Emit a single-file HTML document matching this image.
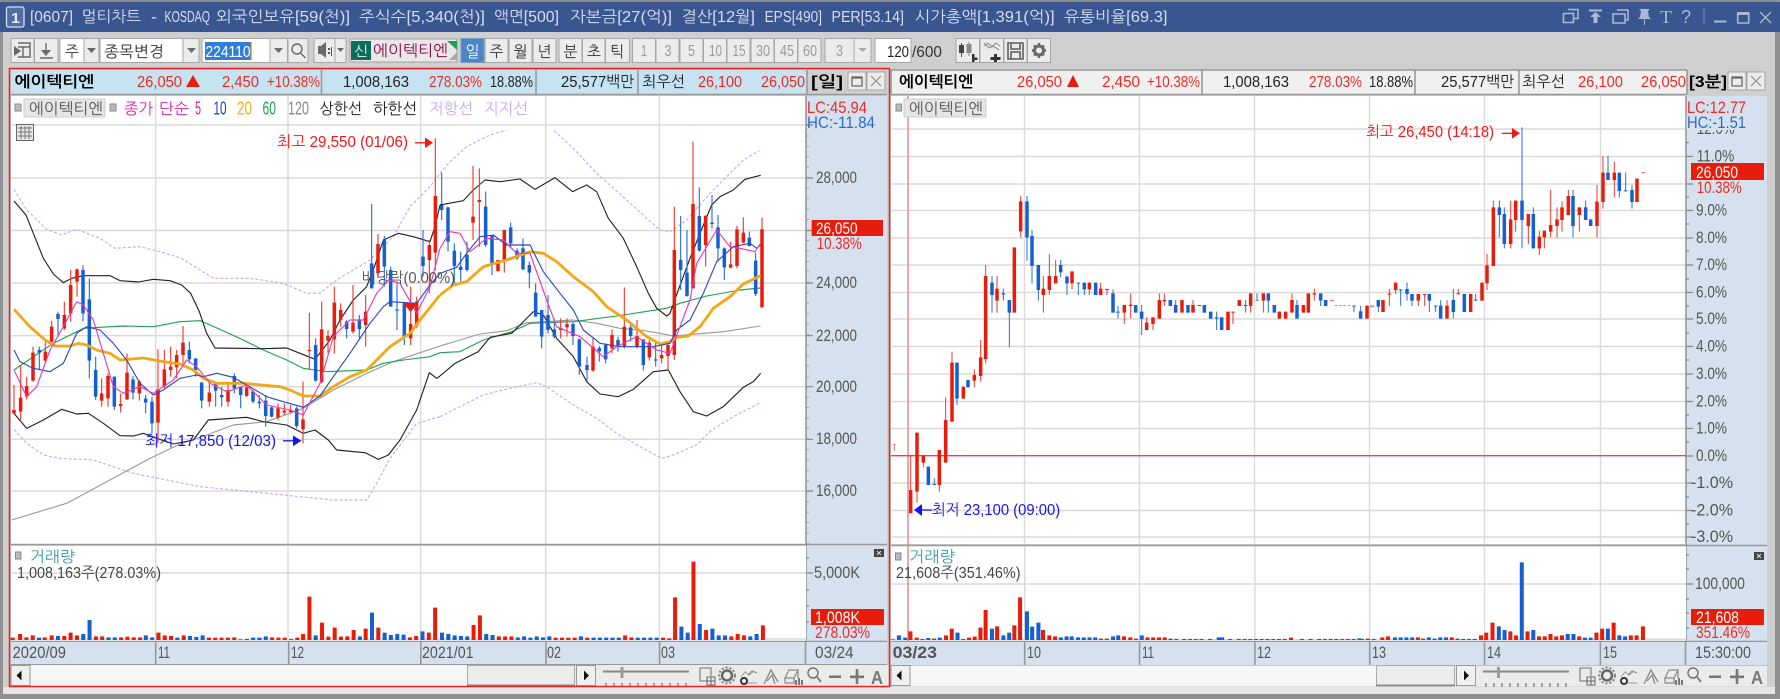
<!DOCTYPE html>
<html lang="ko"><head><meta charset="utf-8"><title>멀티차트</title>
<style>
html,body{margin:0;padding:0;background:#cfcfcf;width:1780px;height:699px;overflow:hidden}
svg{display:block;position:absolute;left:0;top:0;filter:blur(.35px)}
text{font-family:"Liberation Sans","NanumGothic","Noto Sans CJK KR",sans-serif;font-size:15.5px;fill:#333}
.t text{fill:#d4deef}.r{fill:#ee2a22}.k{fill:#222}.g{fill:#555;font-size:16.5px}.b{font-weight:700;fill:#000}
.btn{fill:#ececec;stroke:#a6a6a6;stroke-width:1}.dis{fill:#9a9a9a;font-size:16px}.ln{fill:none;stroke-linejoin:round}
.grid{fill:none;stroke:#dadada;stroke-width:1.4}.ax{fill:#d6e1ef}.sep{stroke:#989898;stroke-width:1.6;fill:none}
.ti{fill:none;stroke:#6a6a6a;stroke-width:1.4}.tf{fill:#6a6a6a}.ic{fill:none;stroke:#a9b8d4;stroke-width:1.6}.if{fill:#a9b8d4}
</style></head><body>
<svg width="1780" height="699" viewBox="0 0 1780 699" xmlns="http://www.w3.org/2000/svg">
<rect width="1780" height="699" fill="#cfcfcf"/>
<rect width="1780" height="2" fill="#8a8a8a"/><rect width="3" height="699" fill="#8f8f8f"/><rect x="1775" width="5" height="699" fill="#8f8f8f"/>
<rect x="0" y="694" width="1780" height="5" fill="#8f8f8f"/><rect x="3" y="687" width="1772" height="7" fill="#e6e6e6"/>
<rect x="0" y="2" width="1780" height="30" fill="#3a5690"/>
<rect x="6.5" y="7" width="17.5" height="20" rx="2" fill="#4f6da6" stroke="#d4deef" stroke-width="1.3"/>
<text x="11" y="23" textLength="9" lengthAdjust="spacingAndGlyphs" style="font-size:15px;font-weight:700;fill:#e8eef8">1</text>
<g class="t">
<text x="30" y="22" textLength="43" lengthAdjust="spacingAndGlyphs">[0607]</text>
<text x="81.5" y="22" textLength="59.5" lengthAdjust="spacingAndGlyphs">멀티차트</text>
<text x="151" y="22" textLength="6" lengthAdjust="spacingAndGlyphs">-</text>
<text x="164.5" y="22" textLength="45.5" lengthAdjust="spacingAndGlyphs" style="font-size:16px">KOSDAQ</text>
<text x="216" y="22" textLength="134" lengthAdjust="spacingAndGlyphs">외국인보유[59(천)]</text>
<text x="359" y="22" textLength="126" lengthAdjust="spacingAndGlyphs">주식수[5,340(천)]</text>
<text x="494" y="22" textLength="65" lengthAdjust="spacingAndGlyphs">액면[500]</text>
<text x="570" y="22" textLength="102" lengthAdjust="spacingAndGlyphs">자본금[27(억)]</text>
<text x="681.5" y="22" textLength="73.5" lengthAdjust="spacingAndGlyphs">결산[12월]</text>
<text x="764.6" y="22" textLength="57.4" lengthAdjust="spacingAndGlyphs" style="font-size:16px">EPS[490]</text>
<text x="831.5" y="22" textLength="72.5" lengthAdjust="spacingAndGlyphs" style="font-size:16px">PER[53.14]</text>
<text x="914.6" y="22" textLength="140" lengthAdjust="spacingAndGlyphs">시가총액[1,391(억)]</text>
<text x="1064" y="22" textLength="103.5" lengthAdjust="spacingAndGlyphs">유통비율[69.3]</text>
</g>
<!-- window icons -->
<path class="ic" d="M1568 9.5h10v9h-4M1563.5 13.5h10v9h-10z"/>
<path class="if" d="M1589 9.5h13v2h-13zM1595.5 12l5.5 5h-3.500v6h-4v-6h-3.500z"/>
<path class="ic" d="M1617 10h11v10h-3M1613 14h12v9h-12z"/>
<path class="if" d="M1639 9h11l-2 2 1 6 2 2h-6v6h-1v-6h-6l2-2 1-6z"/>
<text x="1660" y="23" textLength="12" lengthAdjust="spacingAndGlyphs" style="font-family:'Liberation Serif',serif;font-size:18px;fill:#a9b8d4">T</text>
<text x="1681" y="23" textLength="10" lengthAdjust="spacingAndGlyphs" style="font-size:18px;fill:#a9b8d4">?</text>
<path d="M1704 8v17" stroke="#7c90b8" stroke-width="1"/>
<rect x="1714" y="20.500" width="12.500" height="2" fill="#a9b8d4"/>
<path class="ic" d="M1737.700 13h11v10h-11z"/><rect x="1737" y="12" width="12.500" height="3" fill="#a9b8d4"/>
<path d="M1760 12l11 11M1771 12l-11 11" stroke="#a9b8d4" stroke-width="1.300"/>

<!-- toolbar -->
<rect class="btn" x="11" y="38.500" width="23" height="24"/><rect class="btn" x="34.500" y="38.500" width="23.500" height="24"/>
<path class="ti" d="M18 43h12v14H18M18 47h12M23 47v10"/><path class="tf" d="M14 46l7 5-7 5z"/>
<path class="ti" d="M46 43v9M40 58h13"/><path class="tf" d="M41 50h10l-5 6z"/>
<rect x="60" y="38.500" width="24" height="24" fill="#fff" stroke="#a6a6a6"/><text x="65" y="57" textLength="14" lengthAdjust="spacingAndGlyphs">주</text>
<rect class="btn" x="84" y="38.500" width="15" height="24"/><path class="tf" d="M87 48h9l-4.500 5z"/>
<rect x="100" y="38.500" width="83" height="24" fill="#fff" stroke="#a6a6a6"/><text x="104" y="57" textLength="60" lengthAdjust="spacingAndGlyphs">종목변경</text>
<rect class="btn" x="183" y="38.500" width="16" height="24"/><path class="tf" d="M187 48h9l-4.500 5z"/>
<rect x="202" y="38.500" width="68" height="24" fill="#fff" stroke="#a6a6a6"/><rect x="205" y="42" width="46" height="18" fill="#2f7fd6"/>
<text x="205.500" y="57" textLength="45" lengthAdjust="spacingAndGlyphs" style="fill:#fff">224110</text><rect x="250.500" y="42" width="1.200" height="18" fill="#f08a20"/>
<rect class="btn" x="270" y="38.500" width="17.500" height="24"/><path class="tf" d="M274 48h9l-4.500 5z"/>
<rect class="btn" x="288" y="38.500" width="20" height="24"/><circle class="ti" cx="297" cy="49" r="5"/><path class="ti" d="M300.500 53l5 5"/>
<rect class="btn" x="314" y="38.500" width="21" height="24"/><path class="tf" d="M318 46h3l5-4v16l-5-4h-3z"/><path d="M328 48h2v2h-2zM328 52h2v2h-2zM331 47h1v9h-1z" fill="#555"/>
<rect class="btn" x="335" y="38.500" width="11" height="24"/><path class="tf" d="M337 48h7l-3.500 4z"/>
<rect x="350" y="39" width="107" height="23" fill="#e8e8e8" stroke="#a6a6a6"/><rect x="351" y="41" width="20" height="19" fill="#0a6d5e"/>
<text x="354" y="56" textLength="14" lengthAdjust="spacingAndGlyphs" style="fill:#e8f5f0;font-size:14px">신</text>
<text x="373" y="56" textLength="75" lengthAdjust="spacingAndGlyphs" style="fill:#8d0a48">에이텍티엔</text>
<path d="M447 41h10v9z" fill="#18a05a"/><path d="M457 52v8h-8z" fill="#aaa"/>
<rect x="461" y="38.500" width="23" height="24" fill="#4c86c4" stroke="#7a9cc4"/><text x="465.500" y="57" textLength="14" lengthAdjust="spacingAndGlyphs" style="fill:#fff">일</text>
<rect class="btn" x="485" y="38.500" width="23" height="24"/><text x="489.500" y="57" textLength="14" lengthAdjust="spacingAndGlyphs">주</text>
<rect class="btn" x="509" y="38.500" width="23" height="24"/><text x="513.500" y="57" textLength="14" lengthAdjust="spacingAndGlyphs">월</text>
<rect class="btn" x="533" y="38.500" width="23" height="24"/><text x="537.500" y="57" textLength="14" lengthAdjust="spacingAndGlyphs">년</text>
<rect class="btn" x="559" y="38.500" width="23" height="24"/><text x="563.500" y="57" textLength="14" lengthAdjust="spacingAndGlyphs">분</text>
<rect class="btn" x="582.500" y="38.500" width="22.500" height="24"/><text x="587" y="57" textLength="14" lengthAdjust="spacingAndGlyphs">초</text>
<rect class="btn" x="605.500" y="38.500" width="24" height="24"/><text x="610" y="57" textLength="14" lengthAdjust="spacingAndGlyphs">틱</text>
<rect class="btn" x="632.500" y="38.500" width="23" height="24"/><text x="641" y="56" class="dis" textLength="6" lengthAdjust="spacingAndGlyphs">1</text>
<rect class="btn" x="656" y="38.500" width="23" height="24"/><text x="664.500" y="56" class="dis" textLength="7" lengthAdjust="spacingAndGlyphs">3</text>
<rect class="btn" x="680" y="38.500" width="23" height="24"/><text x="688" y="56" class="dis" textLength="7" lengthAdjust="spacingAndGlyphs">5</text>
<rect class="btn" x="703.500" y="38.500" width="23" height="24"/><text x="709" y="56" class="dis" textLength="13" lengthAdjust="spacingAndGlyphs">10</text>
<rect class="btn" x="727" y="38.500" width="23" height="24"/><text x="732.500" y="56" class="dis" textLength="13" lengthAdjust="spacingAndGlyphs">15</text>
<rect class="btn" x="751" y="38.500" width="23" height="24"/><text x="756" y="56" class="dis" textLength="14" lengthAdjust="spacingAndGlyphs">30</text>
<rect class="btn" x="774.500" y="38.500" width="23" height="24"/><text x="780" y="56" class="dis" textLength="14" lengthAdjust="spacingAndGlyphs">45</text>
<rect class="btn" x="798" y="38.500" width="23" height="24"/><text x="803" y="56" class="dis" textLength="14" lengthAdjust="spacingAndGlyphs">60</text>
<rect class="btn" x="825" y="38.500" width="29" height="24"/><text x="836" y="56" class="dis" textLength="7" lengthAdjust="spacingAndGlyphs">3</text>
<rect class="btn" x="854" y="38.500" width="17" height="24"/><path d="M858 48h9l-4.500 4z" fill="#aaa"/>
<rect x="875" y="38.500" width="36" height="24" fill="#fff" stroke="#a6a6a6"/><text x="887" y="57" textLength="22" lengthAdjust="spacingAndGlyphs" class="k">120</text>
<text x="912" y="57" textLength="30" lengthAdjust="spacingAndGlyphs">/600</text>
<rect class="btn" x="956" y="38.500" width="23.500" height="24"/><rect class="btn" x="980" y="38.500" width="23.500" height="24"/><rect class="btn" x="1004" y="38.500" width="23" height="24"/><rect class="btn" x="1027.500" y="38.500" width="23" height="24"/>
<path d="M961.500 43v14" stroke="#444" stroke-width="1"/><rect x="959" y="45" width="5" height="8" fill="#444"/><path d="M969 42v14" stroke="#888" stroke-width="1"/><rect x="966.500" y="44" width="5" height="9" fill="#888"/><path d="M972 54h2.500v3.500h3v2.500h-3v2h-2.500z" fill="#333"/>
<path d="M984 46l4-3 4 4 4-4 4 3M984 43l5 5 4-2 6 4" fill="none" stroke="#888" stroke-width="1"/><path d="M994 54h3v3h3.500v3h-3.500v2h-3v-2h-3.500v-3h3.500z" fill="#333"/>
<path d="M1008 43h15v16h-15zM1011 43v6h9v-6M1011 59v-7h9v7" fill="none" stroke="#6e6e6e" stroke-width="1.800"/>
<circle cx="1039" cy="50.500" r="4.500" fill="none" stroke="#6a6a6a" stroke-width="3"/><path d="M1039 43v3M1039 55v3M1032 50.500h3M1043 50.500h3M1034 45.500l2 2M1042 53.500l2 2M1044 45.500l-2 2M1036 53.500l-2 2" stroke="#6a6a6a" stroke-width="2.400"/>

<!-- LEFT PANE -->
<rect x="11" y="70" width="796" height="24" fill="#c5e3f0"/>
<rect x="807" y="70" width="80" height="24" fill="#cfcfcf"/>
<path class="sep" d="M11 94.500H887M321.500 70v24M536 70v24M638 70v24M807 70v24"/>
<text class="b" x="14.500" y="87" textLength="79.500" lengthAdjust="spacingAndGlyphs">에이텍티엔</text>
<text class="r" x="137" y="87" textLength="45" lengthAdjust="spacingAndGlyphs">26,050</text><path d="M186 87l7-12 7 12z" fill="#ea1c0c"/>
<text class="r" x="222" y="87" textLength="37" lengthAdjust="spacingAndGlyphs">2,450</text>
<text class="r" x="267" y="87" textLength="53" lengthAdjust="spacingAndGlyphs">+10.38%</text>
<text class="k" x="343" y="87" textLength="66" lengthAdjust="spacingAndGlyphs">1,008,163</text>
<text class="r" x="429" y="87" textLength="53" lengthAdjust="spacingAndGlyphs">278.03%</text>
<text class="k" x="490" y="87" textLength="43" lengthAdjust="spacingAndGlyphs">18.88%</text>
<text class="k" x="561" y="87" textLength="73" lengthAdjust="spacingAndGlyphs">25,577백만</text>
<text class="k" x="642" y="87" textLength="43" lengthAdjust="spacingAndGlyphs">최우선</text>
<text class="r" x="698" y="87" textLength="44" lengthAdjust="spacingAndGlyphs">26,100</text>
<text class="r" x="761" y="87" textLength="44" lengthAdjust="spacingAndGlyphs">26,050</text>
<text class="b" x="811" y="87" textLength="32" lengthAdjust="spacingAndGlyphs">[일]</text>
<rect class="btn" x="848" y="72" width="18" height="18"/><path d="M852 77h10v9h-10zM852 78h10" fill="none" stroke="#666" stroke-width="1.300"/>
<rect class="btn" x="867" y="72" width="18" height="18"/><path d="M871 76l10 10M881 76l-10 10" stroke="#888" stroke-width="1"/>

<rect x="11" y="96" width="795" height="448" fill="#fff"/>
<rect class="ax" x="806" y="96" width="81" height="568"/>
<path class="grid" d="M11 125H806M11 178H806M11 230.500H806M11 283H806M11 335.700H806M11 386.700H806M11 439.300H806M11 491H806M155.700 96V544M288 96V544M420.700 96V544M545.700 96V544M659.300 96V544"/>
<path class="sep" d="M806 96V664"/>
<path d="M807.500 125V544" stroke="#a0a0a0" stroke-width="3" fill="none" stroke-dasharray="1 9.450"/>
<path d="M806 125h7M806 178h7M806 230.500h7M806 283h7M806 335.700h7M806 386.700h7M806 439.300h7M806 491h7" stroke="#888" stroke-width="1.200"/>
<text class="g" x="816" y="183" textLength="41" lengthAdjust="spacingAndGlyphs">28,000</text>
<text class="g" x="816" y="288" textLength="41" lengthAdjust="spacingAndGlyphs">24,000</text>
<text class="g" x="816" y="341" textLength="41" lengthAdjust="spacingAndGlyphs">22,000</text>
<text class="g" x="816" y="392" textLength="41" lengthAdjust="spacingAndGlyphs">20,000</text>
<text class="g" x="816" y="444" textLength="41" lengthAdjust="spacingAndGlyphs">18,000</text>
<text class="g" x="816" y="496" textLength="41" lengthAdjust="spacingAndGlyphs">16,000</text>
<rect x="811.700" y="220" width="71.300" height="16" fill="#e81c0a"/>
<text x="816" y="234" textLength="41.500" lengthAdjust="spacingAndGlyphs" style="font-size:16.5px;fill:#fff">26,050</text>
<text class="r" x="816.700" y="249" textLength="45" lengthAdjust="spacingAndGlyphs" style="font-size:16.5px">10.38%</text>
<text class="r" x="807" y="113" textLength="60" lengthAdjust="spacingAndGlyphs" style="font-size:16.5px">LC:45.94</text>
<text x="807" y="128" textLength="68" lengthAdjust="spacingAndGlyphs" style="font-size:16.5px;fill:#2a6ad0">HC:-11.84</text>

<!-- left candles & lines part 1 -->
<svg x="0" y="130" width="806" height="414" viewBox="0 0 2418 1242" style="overflow:hidden;filter:none">
<g fill="none" stroke-width="3.4" class="ln">
<polyline stroke="#c8a8f0" stroke-dasharray="9 6" points="42,178 80,240 140,298 185,315 230,298 300,325 345,355 420,350 480,365 545,385 600,420 640,445 750,445 850,460 920,490 960,490 1010,450 1110,390 1180,320 1230,230 1290,170 1320,130"/>
<polyline stroke="#c8a8f0" stroke-dasharray="9 6" points="42,898 80,940 130,975 180,985 280,990 400,1030 600,1070 800,1090 1000,1110 1100,1110 1130,1060 1170,985 1250,880 1320,860"/>
<polyline stroke="#999" points="35,1170 200,1120 450,985 540,942 620,915 700,885 800,875 910,835 1000,780 1100,730 1180,695 1260,668 1320,648"/>
<polyline stroke="#20a050" points="42,720 100,680 160,640 250,595 300,592 370,588 460,590 540,575 600,572 660,598 730,630 790,660 860,690 910,715 980,725 1100,720 1150,700 1210,690 1290,680 1320,668"/>
<polyline stroke="#222" points="42,213 78,255 100,310 130,385 160,432 190,458 215,445 250,437 330,437 360,452 415,456 460,448 510,452 545,465 572,490 598,545 620,610 645,654 790,656 860,654 900,670 945,688 990,630 1020,570 1060,510 1100,470 1125,405 1150,330 1195,310 1240,320 1290,335 1305,290 1320,225"/>
<polyline stroke="#222" points="42,850 80,895 130,870 185,838 230,852 265,850 310,880 360,917 400,918 430,910 470,925 520,942 580,930 625,870 740,862 790,875 860,885 910,910 945,900 985,930 1010,960 1095,968 1135,988 1165,975 1200,930 1250,840 1288,728 1310,745 1320,738"/>
<path stroke="#ee3a2e" d="M42 765V850M62 705V870M80 740V808M99 650V755M136 628V695M155 572V648M193 515V600M212 420V575M231 415V500M305 745V830M324 730V830M362 790V848M381 670V810M418 750V812M474 658V940M493 660V775M512 650V740M530 660V745M549 588V700M628 755V830M684 755V830M740 760V800M834 820V870M853 820V855M872 825V850M909 755V940M928 548V720M965 515V760M984 600V670M1003 470V670M1022 520V590M1059 465V610M1097 495V650M1134 312V440M1232 470V645M1250 500V595M1288 330V490M1306 25V420"/>
<path stroke="#2a6fd6" d="M118 650V720M174 545V615M249 405V575M268 445V745M287 680V810M343 740V840M399 738V808M437 795V850M456 800V910M568 635V700M587 685V740M605 755V835M647 755V830M665 770V830M703 730V790M722 770V835M759 780V820M778 795V835M797 795V890M815 830V862M890 830V895M947 625V755M1040 570V625M1078 555V625M1115 222V475M1153 318V470M1172 410V530M1191 455V600M1213 520V645M1269 300V440M1325 128V270M1344 230V365"/>
<path stroke="#e81c0a" stroke-width="10.500" d="M42 840V850M62 803V845M80 768V800M99 668V752M136 665V692M155 590V635M193 555V595M212 465V550M231 418V455M305 790V812M324 738V805M362 822V828M381 728V808M418 755V790M474 778V878M493 718V770M512 710V720M530 675V712M549 638V675M628 788V815M684 780V815M740 772V798M834 835V862M853 842V848M872 840V846M909 868V898M928 660V663M965 598V756M984 618V632M1003 518V628M1022 540V570M1059 578V605M1097 545V585M1134 342V430M1232 582V625M1250 515V588M1288 345V390M1306 198V368"/>
<path stroke="#1560d0" stroke-width="10.500" d="M118 660V668M174 552V567M249 420V550M268 508V692M287 720V800M343 740V830M399 748V788M437 806V818M456 815V880M568 660V688M587 685V720M605 758V812M647 762V782M665 795V802M703 738V775M722 770V795M759 785V815M778 815V820M797 812V858M815 832V860M890 835V888M947 645V752M1040 575V597M1078 568V597M1115 400V475M1153 328V410M1172 420V530M1191 538V542M1213 520V620M1269 380V408M1325 222V240M1344 232V335"/>
<polyline stroke="#f0a818" stroke-width="8.500" points="42,538 90,590 135,630 165,648 210,648 235,640 260,645 290,660 330,670 360,690 430,684 490,695 540,702 580,720 610,745 650,760 730,760 840,770 870,780 910,798 960,798 1000,770 1050,740 1100,720 1130,690 1170,650 1230,610 1260,570 1300,520 1320,495"/>
<polyline stroke="#2a48c0" points="42,660 60,695 100,715 150,725 190,700 230,610 260,590 300,600 340,640 380,690 420,760 460,795 490,780 540,745 590,735 610,740 650,730 700,742 740,765 800,800 850,815 910,832 960,798 1000,740 1050,670 1110,580 1150,530 1170,515 1250,520 1290,465 1320,430"/>
<polyline stroke="#e838b8" points="42,720 80,800 110,770 150,660 190,590 230,515 250,525 280,570 310,670 340,770 370,790 420,770 460,790 520,750 560,690 590,710 630,760 680,785 740,765 800,825 870,840 910,855 960,760 1000,620 1050,570 1090,570 1130,490 1165,450 1200,460 1250,550 1290,470 1320,355"/>
</g>
</svg>
<!-- part 2 -->
<svg x="440" y="130" width="366" height="414" viewBox="0 0 1098 1242" style="overflow:hidden;filter:none">
<g fill="none" stroke-width="3.4" class="ln">
<polyline stroke="#c8a8f0" stroke-dasharray="9 6" points="0,130 30,95 80,50 150,15 200,0 270,-36 340,0 400,55 470,130 560,210 620,265 660,300 690,305 740,270 810,190 870,130 910,90 958,62"/>
<polyline stroke="#c8a8f0" stroke-dasharray="9 6" points="0,860 60,830 130,795 210,775 290,758 320,770 400,825 470,865 530,910 600,950 665,985 700,975 770,945 815,900 880,860 958,820"/>
<polyline stroke="#999" points="0,648 60,630 120,612 200,602 260,578 400,570 470,580 540,595 600,600 660,610 700,618 850,605 962,588"/>
<polyline stroke="#20a050" points="0,668 60,665 130,630 215,605 270,580 400,575 530,558 680,535 720,520 800,498 900,480 962,474"/>
<polyline stroke="#222" points="0,225 70,212 100,180 135,150 180,155 240,147 285,178 345,143 398,185 440,165 470,185 505,265 550,325 590,410 625,490 650,535 680,558 690,550 715,480 750,385 780,310 815,225 840,200 880,180 915,148 962,136"/>
<polyline stroke="#222" points="0,738 45,700 115,665 150,622 215,610 255,570 280,545 310,555 350,625 400,680 440,755 480,792 535,800 580,778 640,725 685,720 720,785 760,845 800,858 850,830 910,772 940,755 962,730"/>
<path stroke="#ee3a2e" d="M99 108V330M118 115V350M174 390V425M193 300V428M362 565V625M381 565V620M459 625V725M516 598V670M553 472V655M591 570V655M628 630V692M665 640V700M684 640V722M703 230V690M759 35V475M797 255V410M872 335V415M891 288V415M910 262V340M966 262V532"/>
<path stroke="#2a6fd6" d="M43 340V460M62 365V455M81 335V425M137 185V350M156 315V435M212 278V355M231 355V390M249 325V420M268 395V475M287 460V560M305 540V655M324 495V610M343 565V625M399 575V645M418 625V735M441 680V755M478 648V695M497 640V700M534 620V665M572 580V635M610 628V722M647 638V710M722 258V480M741 300V500M778 172V365M816 195V295M834 255V395M853 352V450M928 305V350M947 368V498"/>
<path stroke="#e81c0a" stroke-width="10.500" d="M99 260V278M118 210V216M174 390V423M193 300V395M362 594V600M381 582V592M459 650V722M516 615V655M553 590V648M591 618V650M628 638V682M665 675V685M684 645V678M703 360V675M759 222V475M797 258V345M872 403V413M891 298V408M910 308V338M966 298V532"/>
<path stroke="#1560d0" stroke-width="10.500" d="M43 362V408M62 410V420M81 375V420M137 230V345M156 315V405M212 292V340M231 362V385M249 355V418M268 405V428M287 488V560M305 540V620M324 555V600M343 598V620M399 582V618M418 628V710M441 705V720M478 654V664M497 645V688M534 630V650M572 592V618M610 628V705M647 688V692M722 390V420M741 428V498M778 258V362M816 278V282M834 292V355M853 355V412M928 323V348M947 392V492"/>
<polyline stroke="#f0a818" stroke-width="8.500" points="0,495 40,465 80,455 130,410 200,390 270,365 310,370 350,395 400,440 460,485 500,530 560,570 620,620 660,642 690,635 710,622 745,618 780,590 820,535 870,500 910,462 962,437"/>
<polyline stroke="#2a48c0" points="0,430 50,412 80,370 120,320 160,315 200,345 270,345 310,425 360,490 400,540 430,600 480,640 540,650 640,650 690,640 710,600 750,570 790,490 830,395 880,350 930,340 950,355 962,345"/>
<polyline stroke="#e838b8" points="0,355 30,305 60,310 90,365 140,325 190,330 230,370 270,370 320,510 350,590 420,620 490,680 530,650 590,620 650,660 690,670 720,590 750,510 770,400 830,300 870,350 900,355 945,365 962,340"/>
</g>
</svg>
<!-- left legend -->
<rect x="15" y="104" width="6" height="7" fill="#bbb" stroke="#888"/>
<rect x="24" y="99" width="81" height="18" fill="#e6e6e6" stroke="#ccc"/>
<text x="29" y="114" textLength="74" lengthAdjust="spacingAndGlyphs" style="fill:#555">에이텍티엔</text>
<rect x="110" y="104" width="6" height="7" fill="#bbb" stroke="#888"/>
<text x="124" y="114" textLength="29" lengthAdjust="spacingAndGlyphs" style="fill:#e020a8">종가</text>
<text x="159" y="114" textLength="30" lengthAdjust="spacingAndGlyphs" style="fill:#e020a8">단순</text>
<text x="195" y="114.500" textLength="6" lengthAdjust="spacingAndGlyphs" style="fill:#e020a8;font-size:18px">5</text>
<text x="213.500" y="114.500" textLength="13" lengthAdjust="spacingAndGlyphs" style="fill:#2040c0;font-size:18px">10</text>
<text x="237" y="114.500" textLength="15" lengthAdjust="spacingAndGlyphs" style="fill:#f0b020;font-size:18px">20</text>
<text x="262.500" y="114.500" textLength="13.500" lengthAdjust="spacingAndGlyphs" style="fill:#20a050;font-size:18px">60</text>
<text x="288" y="114.500" textLength="21" lengthAdjust="spacingAndGlyphs" style="fill:#888;font-size:18px">120</text>
<text x="319.500" y="114" textLength="42.500" lengthAdjust="spacingAndGlyphs" class="k">상한선</text>
<text x="373" y="114" textLength="44" lengthAdjust="spacingAndGlyphs" class="k">하한선</text>
<text x="429" y="114" textLength="44" lengthAdjust="spacingAndGlyphs" style="fill:#c8a8f0">저항선</text>
<text x="484" y="114" textLength="44" lengthAdjust="spacingAndGlyphs" style="fill:#c8a8f0">지지선</text>
<rect x="16.500" y="124.500" width="17" height="16" fill="#e8e8e8" stroke="#666"/><path d="M18 128h14M18 132h14M18 136h14M21 126v13M25 126v13M29 126v13" stroke="#777" stroke-width="1"/>
<!-- left annotations -->
<text x="277" y="147" textLength="131" lengthAdjust="spacingAndGlyphs" style="fill:#f01818">최고 29,550 (01/06)</text>
<path d="M415 142.800h12" stroke="#f01818" stroke-width="1.300"/><path d="M425 137.500l8 5.300-8 5.300z" fill="#f01818"/>
<text x="145" y="446" textLength="131" lengthAdjust="spacingAndGlyphs" style="fill:#1414f0">최저 17,850 (12/03)</text>
<path d="M283 440.800h12" stroke="#1414f0" stroke-width="1.300"/><path d="M293 435.500l8.500 5.300-8.500 5.300z" fill="#1414f0"/>
<text x="362" y="283" textLength="93" lengthAdjust="spacingAndGlyphs" style="fill:#555">배당락(0.00%)</text>
<path d="M403 303h15l-7.500 9z" fill="#e81c0a"/>
<!-- left volume -->
<rect x="11" y="546" width="795" height="95" fill="#fff"/>
<path class="sep" d="M11 544.500H887M11 641.500H887M11 664.500H887"/>
<path class="grid" d="M11 573H806M11 639H806M155.700 546V641M288 546V641M420.700 546V641M545.700 546V641M659.300 546V641"/>
<path d="M806 573h7M806 558h3M806 590h3M806 606h3M806 622h3" stroke="#888" stroke-width="1.200"/>
<rect x="15.500" y="552" width="5.500" height="7" fill="#bbb" stroke="#888"/>
<text x="30" y="562" textLength="45" lengthAdjust="spacingAndGlyphs" style="fill:#38a0a0">거래량</text>
<text x="17" y="578" textLength="144" lengthAdjust="spacingAndGlyphs" style="fill:#444">1,008,163주(278.03%)</text>
<text class="g" x="814" y="578" textLength="46" lengthAdjust="spacingAndGlyphs">5,000K</text>
<rect x="874" y="549" width="10" height="8" fill="#444"/><path d="M877 551l4 4M881 551l-4 4" stroke="#ddd" stroke-width="1"/>
<rect x="811" y="609" width="73" height="16" fill="#e81c0a"/>
<text x="815" y="623" textLength="45" lengthAdjust="spacingAndGlyphs" style="font-size:16.5px;fill:#fff">1,008K</text>
<text class="r" x="815" y="638" textLength="55" lengthAdjust="spacingAndGlyphs" style="font-size:16.5px">278.03%</text>
<svg x="0" y="540" width="900" height="101" viewBox="0 0 1567.800 303" preserveAspectRatio="none" style="overflow:hidden;filter:none">
<path fill="none" stroke="#e81c0a" stroke-width="7" d="M22 293V300M35 282V300M46 292V300M57 286V300M78 292V300M90 286V300M112 288V300M123 278V300M134 286V300M167 289V300M178 289V300M211 292V300M222 290V300M233 292V300M244 292V300M276 278V300M287 286V300M298 288V300M320 286V300M364 293V300M375 293V300M386 293V300M397 293V300M408 292V300M419 298V300M474 292V300M485 293V300M496 293V300M518 293V300M528 282V300M539 170V300M561 248V300M572 290V300M583 263V300M594 290V300M605 289V300M616 270V300M637 266V300M659 263V300M714 292V300M725 288V300M747 278V300M758 203V300M825 255V300M836 226V300M869 289V300M880 289V300M891 289V300M968 293V300M979 293V300M990 293V300M1001 293V300M1023 293V300M1089 286V300M1100 292V300M1155 293V300M1166 295V300M1176 172V300M1208 65V300M1230 270V300M1274 289V300M1285 282V300M1296 286V300M1329 256V300"/>
<path fill="none" stroke="#1560d0" stroke-width="7" d="M68 293V300M101 288V300M145 282V300M156 240V300M189 292V300M200 292V300M254 286V300M265 292V300M309 293V300M331 288V300M342 291V300M353 286V300M430 297V300M441 293V300M452 293V300M463 289V300M507 297V300M550 286V300M627 289V300M648 218V300M670 278V300M681 285V300M692 282V300M703 284V300M736 274V300M770 278V300M781 282V300M792 286V300M803 288V300M814 289V300M847 282V300M858 285V300M902 292V300M913 289V300M924 293V300M935 289V300M946 292V300M957 289V300M1012 289V300M1034 293V300M1045 293V300M1056 293V300M1067 293V300M1078 293V300M1111 293V300M1122 293V300M1133 293V300M1144 293V300M1187 260V300M1198 278V300M1219 252V300M1241 266V300M1252 286V300M1263 286V300M1307 289V300M1318 282V300"/>
</svg>
<!-- left date axis -->
<rect class="ax" x="11" y="642" width="876" height="22"/>
<path class="sep" d="M155.700 642v22M288.700 642v22M420.800 642v22M546 642v22M659.600 642v22M805.500 642v22"/>
<text class="g" x="12.600" y="658" textLength="53.400" lengthAdjust="spacingAndGlyphs">2020/09</text>
<text class="g" x="158" y="658" textLength="12" lengthAdjust="spacingAndGlyphs">11</text>
<text class="g" x="291" y="658" textLength="13" lengthAdjust="spacingAndGlyphs">12</text>
<text class="g" x="422" y="658" textLength="51.600" lengthAdjust="spacingAndGlyphs">2021/01</text>
<text class="g" x="547" y="658" textLength="14" lengthAdjust="spacingAndGlyphs">02</text>
<text class="g" x="661" y="658" textLength="14" lengthAdjust="spacingAndGlyphs">03</text>
<text class="g" x="815" y="658" textLength="38.600" lengthAdjust="spacingAndGlyphs">03/24</text>
<!-- left scrollbar -->
<rect x="11" y="665" width="878" height="21" fill="#ebebeb"/>
<rect x="30" y="665" width="437" height="21" fill="#f6f6f6"/>
<rect x="11" y="665.500" width="19" height="20" fill="#f0f0f0" stroke="#999"/><path d="M16.500 675.500l5-5v10z" fill="#111"/>
<rect x="467.500" y="665.500" width="107" height="20" fill="#ececec" stroke="#aaa"/><rect x="467" y="684.500" width="108" height="1.800" fill="#888"/>
<rect x="576.500" y="665.500" width="19" height="20" fill="#f0f0f0" stroke="#999"/><path d="M589 675.500l-5-5v10z" fill="#111"/>
<g>
<path d="M603 671.500h86" stroke="#888" stroke-width="2"/><rect x="620.500" y="667" width="3" height="11" fill="#999"/>
<path d="M606 683v4M614 683v4M622 683v4M630 683v4M638 683v4M646 683v4M654 683v4M662 683v4M670 683v4M678 683v4M686 683v4" stroke="#555" stroke-width="1"/>
<path d="M700 668h11v8M700 668v13h8" fill="none" stroke="#888" stroke-width="1.300"/><path d="M707 677h8v8h-8zM711 677v8M707 681h8" fill="none" stroke="#666" stroke-width="1"/>
<circle cx="727" cy="675.500" r="5" fill="none" stroke="#666" stroke-width="2.500"/><circle cx="727" cy="675.500" r="8" fill="none" stroke="#777" stroke-width="1.800" stroke-dasharray="2 2"/>
<path d="M741 677l4-5 4 3 4-3M741 683h16" fill="none" stroke="#999" stroke-width="1"/><path d="M748 675l4-4 5 2" fill="none" stroke="#888"/><circle cx="744" cy="681" r="3" fill="#fff" stroke="#333" stroke-width="2"/>
<path d="M764 684l7-14 7 12M767 681l5-6 3 9" fill="none" stroke="#888" stroke-width="1.300"/>
<path d="M785 678l4-8h9l-4 8zM785 678v5h9v-5M794 678l4-8v8" fill="none" stroke="#888" stroke-width="1.200"/><path d="M796 680v5M799 678v7M802 680v5" stroke="#555" stroke-width="1.500"/>
<circle cx="813" cy="673" r="5" fill="none" stroke="#777" stroke-width="1.500"/><path d="M817 677l4 5" stroke="#777" stroke-width="1.800"/>
<rect x="829" y="675.500" width="12" height="2.500" fill="#777"/>
<path d="M850 675.500h14v2.600h-14zM855.700 669h2.600v15h-2.600z" fill="#777"/>
<text x="871" y="684" textLength="12" lengthAdjust="spacingAndGlyphs" style="font-size:18px;font-weight:700;fill:#777">A</text>
</g>
<rect x="9.500" y="68.500" width="880" height="618" fill="none" stroke="#ee2020" stroke-width="1.500"/>

<!-- RIGHT PANE -->
<rect x="891" y="70" width="796" height="24" fill="#f0f0f0"/>
<path class="sep" d="M891 94.500H1687M891 70H1687M1202 70v24M1415 70v24M1519 70v24M1687 70v24M891 70v24"/>
<text class="b" x="899" y="87" textLength="74" lengthAdjust="spacingAndGlyphs">에이텍티엔</text>
<text class="r" x="1017" y="87" textLength="45" lengthAdjust="spacingAndGlyphs">26,050</text><path d="M1067 87l6-12 6 12z" fill="#ea1c0c"/>
<text class="r" x="1102" y="87" textLength="38" lengthAdjust="spacingAndGlyphs">2,450</text>
<text class="r" x="1147" y="87" textLength="53" lengthAdjust="spacingAndGlyphs">+10.38%</text>
<text class="k" x="1223" y="87" textLength="66" lengthAdjust="spacingAndGlyphs">1,008,163</text>
<text class="r" x="1309" y="87" textLength="53" lengthAdjust="spacingAndGlyphs">278.03%</text>
<text class="k" x="1369" y="87" textLength="44" lengthAdjust="spacingAndGlyphs">18.88%</text>
<text class="k" x="1441" y="87" textLength="73" lengthAdjust="spacingAndGlyphs">25,577백만</text>
<text class="k" x="1522" y="87" textLength="43" lengthAdjust="spacingAndGlyphs">최우선</text>
<text class="r" x="1578" y="87" textLength="45" lengthAdjust="spacingAndGlyphs">26,100</text>
<text class="r" x="1641" y="87" textLength="45" lengthAdjust="spacingAndGlyphs">26,050</text>
<text class="b" x="1689" y="87" textLength="38" lengthAdjust="spacingAndGlyphs">[3분]</text>
<rect class="btn" x="1728" y="72" width="18" height="18"/><path d="M1732 77h10v9h-10zM1732 78h10" fill="none" stroke="#666" stroke-width="1.300"/>
<rect class="btn" x="1747" y="72" width="18" height="18"/><path d="M1751 76l10 10M1761 76l-10 10" stroke="#888" stroke-width="1"/>

<rect x="891" y="96" width="795" height="448" fill="#fff"/>
<rect class="ax" x="1686" y="96" width="81" height="568"/>
<path class="grid" d="M891 129H1686M891 156.500H1686M891 184H1686M891 210.500H1686M891 238H1686M891 265H1686M891 292.500H1686M891 319H1686M891 346.500H1686M891 374H1686M891 401.500H1686M891 428.500H1686M891 483H1686M891 510.500H1686M891 537H1686M1024.500 96V544M1139.400 96V544M1254.500 96V544M1369.500 96V544M1484.400 96V544M1600.500 96V544"/>
<path class="sep" d="M1686 96V664"/>
<path d="M1686 129h7M1686 156.500h7M1686 184h7M1686 210.500h7M1686 238h7M1686 265h7M1686 292.500h7M1686 319h7M1686 346.500h7M1686 374h7M1686 401.500h7M1686 428.500h7M1686 456h7M1686 483h7M1686 510.500h7M1686 537h7M1686 142.500h3M1686 197h3M1686 224h3M1686 251h3M1686 279h3M1686 306h3M1686 333h3M1686 360h3M1686 388h3M1686 415h3M1686 442h3M1686 470h3M1686 497h3M1686 524h3" stroke="#888" stroke-width="1.200"/>
<path d="M908 96V641" stroke="#ea9090" stroke-width="1.600"/>
<path d="M891 455.700H1686" stroke="#f04040" stroke-width="1.400"/>
<text class="g" x="1696.700" y="134" textLength="38" lengthAdjust="spacingAndGlyphs">12.0%</text>
<rect x="1686.500" y="115" width="70" height="15" class="ax"/>
<text class="r" x="1687" y="113" textLength="59" lengthAdjust="spacingAndGlyphs" style="font-size:16.5px">LC:12.77</text>
<text x="1687" y="128" textLength="59" lengthAdjust="spacingAndGlyphs" style="font-size:16.5px;fill:#2a6ad0">HC:-1.51</text>
<text class="g" x="1696.700" y="161.500" textLength="37.500" lengthAdjust="spacingAndGlyphs">11.0%</text>
<text class="g" x="1696" y="215.500" textLength="31" lengthAdjust="spacingAndGlyphs">9.0%</text>
<text class="g" x="1696" y="243" textLength="31" lengthAdjust="spacingAndGlyphs">8.0%</text>
<text class="g" x="1696" y="270" textLength="31" lengthAdjust="spacingAndGlyphs">7.0%</text>
<text class="g" x="1696" y="297.500" textLength="31" lengthAdjust="spacingAndGlyphs">6.0%</text>
<text class="g" x="1696" y="324" textLength="31" lengthAdjust="spacingAndGlyphs">5.0%</text>
<text class="g" x="1696" y="351.500" textLength="31" lengthAdjust="spacingAndGlyphs">4.0%</text>
<text class="g" x="1696" y="379" textLength="31" lengthAdjust="spacingAndGlyphs">3.0%</text>
<text class="g" x="1696" y="406.500" textLength="31" lengthAdjust="spacingAndGlyphs">2.0%</text>
<text class="g" x="1696" y="433.500" textLength="31" lengthAdjust="spacingAndGlyphs">1.0%</text>
<text class="g" x="1696" y="461" textLength="31" lengthAdjust="spacingAndGlyphs">0.0%</text>
<text class="g" x="1691" y="488" textLength="42" lengthAdjust="spacingAndGlyphs">-1.0%</text>
<text class="g" x="1691" y="515.500" textLength="42" lengthAdjust="spacingAndGlyphs">-2.0%</text>
<text class="g" x="1691" y="542" textLength="42" lengthAdjust="spacingAndGlyphs">-3.0%</text>
<rect x="1691" y="163" width="73" height="17" fill="#e81c0a"/>
<text x="1696" y="178" textLength="42" lengthAdjust="spacingAndGlyphs" style="font-size:16.5px;fill:#fff">26,050</text>
<text class="r" x="1696.700" y="193" textLength="45" lengthAdjust="spacingAndGlyphs" style="font-size:16.5px">10.38%</text>
<!-- right candles part 1 -->
<svg x="890" y="130" width="440" height="414" viewBox="0 0 1320 1242" style="overflow:hidden;filter:none">
<g fill="none">
<path stroke="#2a6fd6" stroke-width="2" d="M24 977h6M36 977h6M48 977h6"/>
<path stroke="#ee3a2e" stroke-width="2" d="M8 944h10M13 944v18"/>
<path stroke="#ee3a2e" stroke-width="3" d="M62 977V1150M81 908V1118M100 977V1012M148 960V1085M167 802V998M186 665V875M220 770V806M253 718V772M272 630V755M287 405V700M321 438V548M373 352V548M392 198V322M460 438V548M478 372V495M497 390V460M546 424V478M598 458V495M632 458V495M651 476V495M703 525V582M722 490V565M770 562V600M789 562V600M808 490V566M823 490V528M876 510V548M909 510V548M1014 545V600M1029 545V582M1048 510V528M1082 490V548M1120 490V548M1168 545V566M1187 545V566M1206 490V548M1240 525V548M1255 490V548M1273 476V512"/>
<path stroke="#2a6fd6" stroke-width="3" d="M115 1010V1065M133 1045V1065M201 698V825M234 750V772M306 438V548M340 476V512M358 510V652M411 198V392M426 300V460M445 405V512M512 390V442M531 438V495M565 458V495M583 458V495M617 458V495M669 478V548M684 528V565M737 525V548M755 525V615M841 510V528M857 510V548M894 525V548M943 525V548M962 545V566M980 545V600M995 562V600M1067 510V548M1101 490V512M1135 490V548M1153 525V548M1221 510V566M1292 490V528M1307 510V528"/>
<path stroke="#e81c0a" stroke-width="10.500" d="M62 1080V1150M81 908V1085M100 977V998M148 960V1065M167 870V998M186 698V875M220 770V806M253 735V752M272 682V738M287 438V687M321 476V512M373 352V548M392 214V304M460 476V495M478 438V480M497 438V460M546 424V460M598 458V478M632 476V495M651 477V480M703 525V548M722 524V528M770 578V600M789 562V582M808 510V566M823 510V514M876 510V548M909 525V548M928 525V528M1014 545V600M1029 545V548M1048 510V528M1082 490V528M1120 490V512M1168 545V566M1187 545V566M1206 510V548M1240 525V548M1255 490V548M1273 490V494"/>
<path stroke="#1560d0" stroke-width="10.500" d="M115 1010V1065M133 1062V1065M201 698V806M234 750V772M306 458V495M340 490V494M358 510V548M411 214V322M426 318V408M445 405V480M512 405V427M531 440V460M565 458V461M583 458V478M617 458V495M669 490V548M684 545V548M737 525V548M755 545V566M841 510V528M857 525V548M894 525V548M943 525V548M962 545V566M980 562V566M995 562V600M1067 525V528M1101 510V512M1135 490V512M1153 525V548M1221 525V566M1292 490V512M1307 510V528"/>
</g></svg>
<!-- right candles part 2 -->
<svg x="1330" y="110" width="356" height="434" viewBox="0 0 1068 1302" style="overflow:hidden;filter:none">
<g fill="none">
<path stroke="#ee3a2e" stroke-width="3" d="M111 587V626M159 570V606M178 537V588M197 518V552M265 552V588M284 552V588M351 570V626M385 537V552M422 552V606M456 518V572M471 432V540M490 272V468M542 272V415M557 272V365M595 312V402M628 362V435M643 362V415M662 240V382M681 292V382M696 275V365M715 240V315M748 292V365M801 225V382M819 138V296M853 155V262M921 206V276"/>
<path stroke="#2a6fd6" stroke-width="3" d="M72 587V606M92 587V626M145 570V606M212 537V588M231 518V572M246 552V588M298 552V606M317 587V606M332 570V626M370 537V626M403 552V606M437 552V572M508 272V382M523 292V415M576 52V415M610 292V415M729 240V382M767 272V330M782 328V348M834 138V210M868 188V262M887 188V243M906 225V296"/>
<path stroke="#2a6fd6" stroke-width="2" d="M15 587h8M28 587h8M40 587h8M53 587h8"/>
<path stroke="#e81c0a" stroke-width="10.500" d="M111 587V626M126 587V590M159 570V606M178 551V554M197 518V540M265 552V572M284 552V555M351 587V626M385 550V553M422 552V606M456 518V572M471 466V520M490 292V468M542 328V402M557 272V330M595 312V348M628 380V415M643 362V382M662 345V365M681 328V348M696 292V330M715 258V315M748 292V315M801 275V348M819 188V276M853 188V210M921 206V276"/>
<path stroke="#ee3a2e" stroke-width="2.500" d="M0 571H11M935 188H945"/>
<path stroke="#1560d0" stroke-width="10.500" d="M72 587V590M92 604V626M145 570V590M212 539V542M231 537V552M246 552V572M298 552V572M317 587V590M332 587V626M370 570V606M403 552V606M437 569V572M508 292V315M523 312V402M576 272V330M610 312V415M729 258V348M767 292V330M782 328V348M834 188V210M868 188V243M887 241V244M906 240V276"/>
</g></svg>
<!-- right legend -->
<rect x="896" y="104" width="5.500" height="7" fill="#bbb" stroke="#888"/>
<rect x="904" y="99" width="82" height="18" fill="#e6e6e6" stroke="#ccc"/>
<text x="909" y="114" textLength="74" lengthAdjust="spacingAndGlyphs" style="fill:#555">에이텍티엔</text>
<text x="1366" y="137" textLength="128" lengthAdjust="spacingAndGlyphs" style="fill:#f01818">최고 26,450 (14:18)</text>
<path d="M1501.700 133.300h12" stroke="#f01818" stroke-width="1.300"/><path d="M1512 128l8 5.300-8 5.300z" fill="#f01818"/>
<text x="931.700" y="515" textLength="128.500" lengthAdjust="spacingAndGlyphs" style="fill:#1414f0">최저 23,100 (09:00)</text>
<path d="M920 510h12" stroke="#1414f0" stroke-width="1.300"/><path d="M922 504l-8 6 8 6z" fill="#1414f0"/>
<!-- right volume -->
<rect x="891" y="546" width="795" height="95" fill="#fff"/>
<path class="sep" d="M891 545.500H1767M891 641.500H1767M891 665H1767"/>
<path class="grid" d="M891 584H1686M891 639.300H1686M1024.700 546V641M1139.500 546V641M1254.900 546V641M1369.700 546V641M1484.500 546V641M1600.400 546V641"/>
<path d="M908 546V641" stroke="#ea9090" stroke-width="1.600"/>
<path d="M1686 584h7M1686 555h3M1686 569h3M1686 599h3M1686 613h3M1686 628h3" stroke="#888" stroke-width="1.200"/>
<rect x="895.500" y="553" width="5.500" height="7" fill="#bbb" stroke="#888"/>
<text x="909" y="562" textLength="46" lengthAdjust="spacingAndGlyphs" style="fill:#38a0a0">거래량</text>
<text x="896" y="578" textLength="124.600" lengthAdjust="spacingAndGlyphs" style="fill:#444">21,608주(351.46%)</text>
<text class="g" x="1695" y="589" textLength="50" lengthAdjust="spacingAndGlyphs">100,000</text>
<rect x="1754" y="552" width="10" height="8" fill="#444"/><path d="M1757 554l4 4M1761 554l-4 4" stroke="#ddd" stroke-width="1"/>
<rect x="1691" y="609" width="73" height="16" fill="#e81c0a"/>
<text x="1696" y="623" textLength="43" lengthAdjust="spacingAndGlyphs" style="font-size:16.5px;fill:#fff">21,608</text>
<text class="r" x="1696" y="638" textLength="54" lengthAdjust="spacingAndGlyphs" style="font-size:16.5px">351.46%</text>
<svg x="880" y="540" width="900" height="101" viewBox="0 0 1567.800 303" preserveAspectRatio="none" style="overflow:hidden;filter:none">
<path fill="none" stroke="#e81c0a" stroke-width="7" d="M22 298V300M53 274V300M64 293V300M74 297V300M94 296V300M115 286V300M125 266V300M145 297V300M155 293V300M165 290V300M175 263V300M184 210V300M204 259V300M234 256V300M244 172V300M284 270V300M295 286V300M305 289V300M385 296V300M395 296V300M425 289V300M436 292V300M446 296V300M466 292V300M476 292V300M486 292V300M496 292V300M530 297V300M550 297V300M610 297V300M625 297V300M645 297V300M665 297V300M695 297V300M716 293V300M735 297V300M765 297V300M785 297V300M805 297V300M825 297V300M840 297V300M850 296V300M875 292V300M885 289V300M937 292V300M946 296V300M996 292V300M1036 297V300M1047 286V300M1056 278V300M1067 248V300M1098 274V300M1108 286V300M1128 274V300M1148 289V300M1158 289V300M1168 282V300M1178 289V300M1188 286V300M1218 289V300M1248 278V300M1258 266V300M1278 248V300M1308 286V300M1318 286V300M1329 259V300"/>
<path fill="none" stroke="#1560d0" stroke-width="7" d="M33 286V300M44 293V300M84 294V300M104 293V300M135 278V300M195 266V300M215 286V300M225 278V300M256 214V300M265 260V300M276 248V300M315 292V300M325 289V300M334 289V300M345 292V300M355 292V300M365 292V300M375 292V300M406 289V300M415 286V300M456 286V300M506 296V300M516 297V300M540 297V300M560 297V300M575 297V300M590 292V300M596 292V300M635 297V300M655 297V300M675 297V300M685 297V300M705 297V300M750 297V300M775 297V300M795 297V300M815 297V300M835 295V300M860 297V300M897 292V300M907 292V300M917 292V300M927 292V300M956 292V300M966 296V300M976 292V300M986 292V300M1006 296V300M1016 297V300M1026 297V300M1078 259V300M1088 270V300M1118 67V300M1138 270V300M1198 282V300M1208 282V300M1228 293V300M1238 293V300M1268 266V300M1288 286V300M1298 289V300"/>
</svg>
<!-- right date axis -->
<rect class="ax" x="891" y="642" width="876" height="23"/>
<path class="sep" d="M1024.700 642v23M1139.500 642v23M1254.900 642v23M1369.700 642v23M1484.500 642v23M1600.400 642v23M1685.500 642v23"/>
<text class="g" x="892.600" y="658" textLength="44.400" lengthAdjust="spacingAndGlyphs" style="font-weight:700">03/23</text>
<text class="g" x="1027" y="658" textLength="14" lengthAdjust="spacingAndGlyphs">10</text>
<text class="g" x="1142" y="658" textLength="12" lengthAdjust="spacingAndGlyphs">11</text>
<text class="g" x="1257" y="658" textLength="14" lengthAdjust="spacingAndGlyphs">12</text>
<text class="g" x="1372" y="658" textLength="14" lengthAdjust="spacingAndGlyphs">13</text>
<text class="g" x="1487" y="658" textLength="14" lengthAdjust="spacingAndGlyphs">14</text>
<text class="g" x="1603" y="658" textLength="14" lengthAdjust="spacingAndGlyphs">15</text>
<text class="g" x="1695" y="658" textLength="56" lengthAdjust="spacingAndGlyphs">15:30:00</text>
<!-- right scrollbar -->
<rect x="891" y="665.500" width="876" height="21" fill="#ebebeb"/>
<rect x="910" y="665.500" width="467" height="21" fill="#f6f6f6"/>
<rect x="891" y="665.500" width="19" height="20" fill="#f0f0f0" stroke="#999"/><path d="M896.500 675.500l5-5v10z" fill="#111"/>
<rect x="1376.500" y="665.500" width="78" height="20" fill="#ececec" stroke="#aaa"/><rect x="1376" y="684.500" width="79" height="1.800" fill="#888"/>
<rect x="1456.500" y="665.500" width="19" height="20" fill="#f0f0f0" stroke="#999"/><path d="M1469 675.500l-5-5v10z" fill="#111"/>
<g transform="translate(880,0)">
<path d="M603 671.500h86" stroke="#888" stroke-width="2"/><rect x="617" y="667" width="3" height="11" fill="#999"/>
<path d="M606 683v4M614 683v4M622 683v4M630 683v4M638 683v4M646 683v4M654 683v4M662 683v4M670 683v4M678 683v4M686 683v4" stroke="#555" stroke-width="1"/>
<path d="M700 668h11v8M700 668v13h8" fill="none" stroke="#888" stroke-width="1.300"/><path d="M707 677h8v8h-8zM711 677v8M707 681h8" fill="none" stroke="#666" stroke-width="1"/>
<circle cx="727" cy="675.500" r="5" fill="none" stroke="#666" stroke-width="2.500"/><circle cx="727" cy="675.500" r="8" fill="none" stroke="#777" stroke-width="1.800" stroke-dasharray="2 2"/>
<path d="M741 677l4-5 4 3 4-3M741 683h16" fill="none" stroke="#999" stroke-width="1"/><path d="M748 675l4-4 5 2" fill="none" stroke="#888"/><circle cx="744" cy="681" r="3" fill="#fff" stroke="#333" stroke-width="2"/>
<path d="M764 684l7-14 7 12M767 681l5-6 3 9" fill="none" stroke="#888" stroke-width="1.300"/>
<path d="M785 678l4-8h9l-4 8zM785 678v5h9v-5M794 678l4-8v8" fill="none" stroke="#888" stroke-width="1.200"/><path d="M796 680v5M799 678v7M802 680v5" stroke="#555" stroke-width="1.500"/>
<circle cx="813" cy="673" r="5" fill="none" stroke="#777" stroke-width="1.500"/><path d="M817 677l4 5" stroke="#777" stroke-width="1.800"/>
<rect x="829" y="675.500" width="12" height="2.500" fill="#777"/>
<path d="M850 675.500h14v2.600h-14zM855.700 669h2.600v15h-2.600z" fill="#777"/>
<text x="871" y="684" textLength="12" lengthAdjust="spacingAndGlyphs" style="font-size:18px;font-weight:700;fill:#777">A</text>
</g>
</svg>
</body></html>
